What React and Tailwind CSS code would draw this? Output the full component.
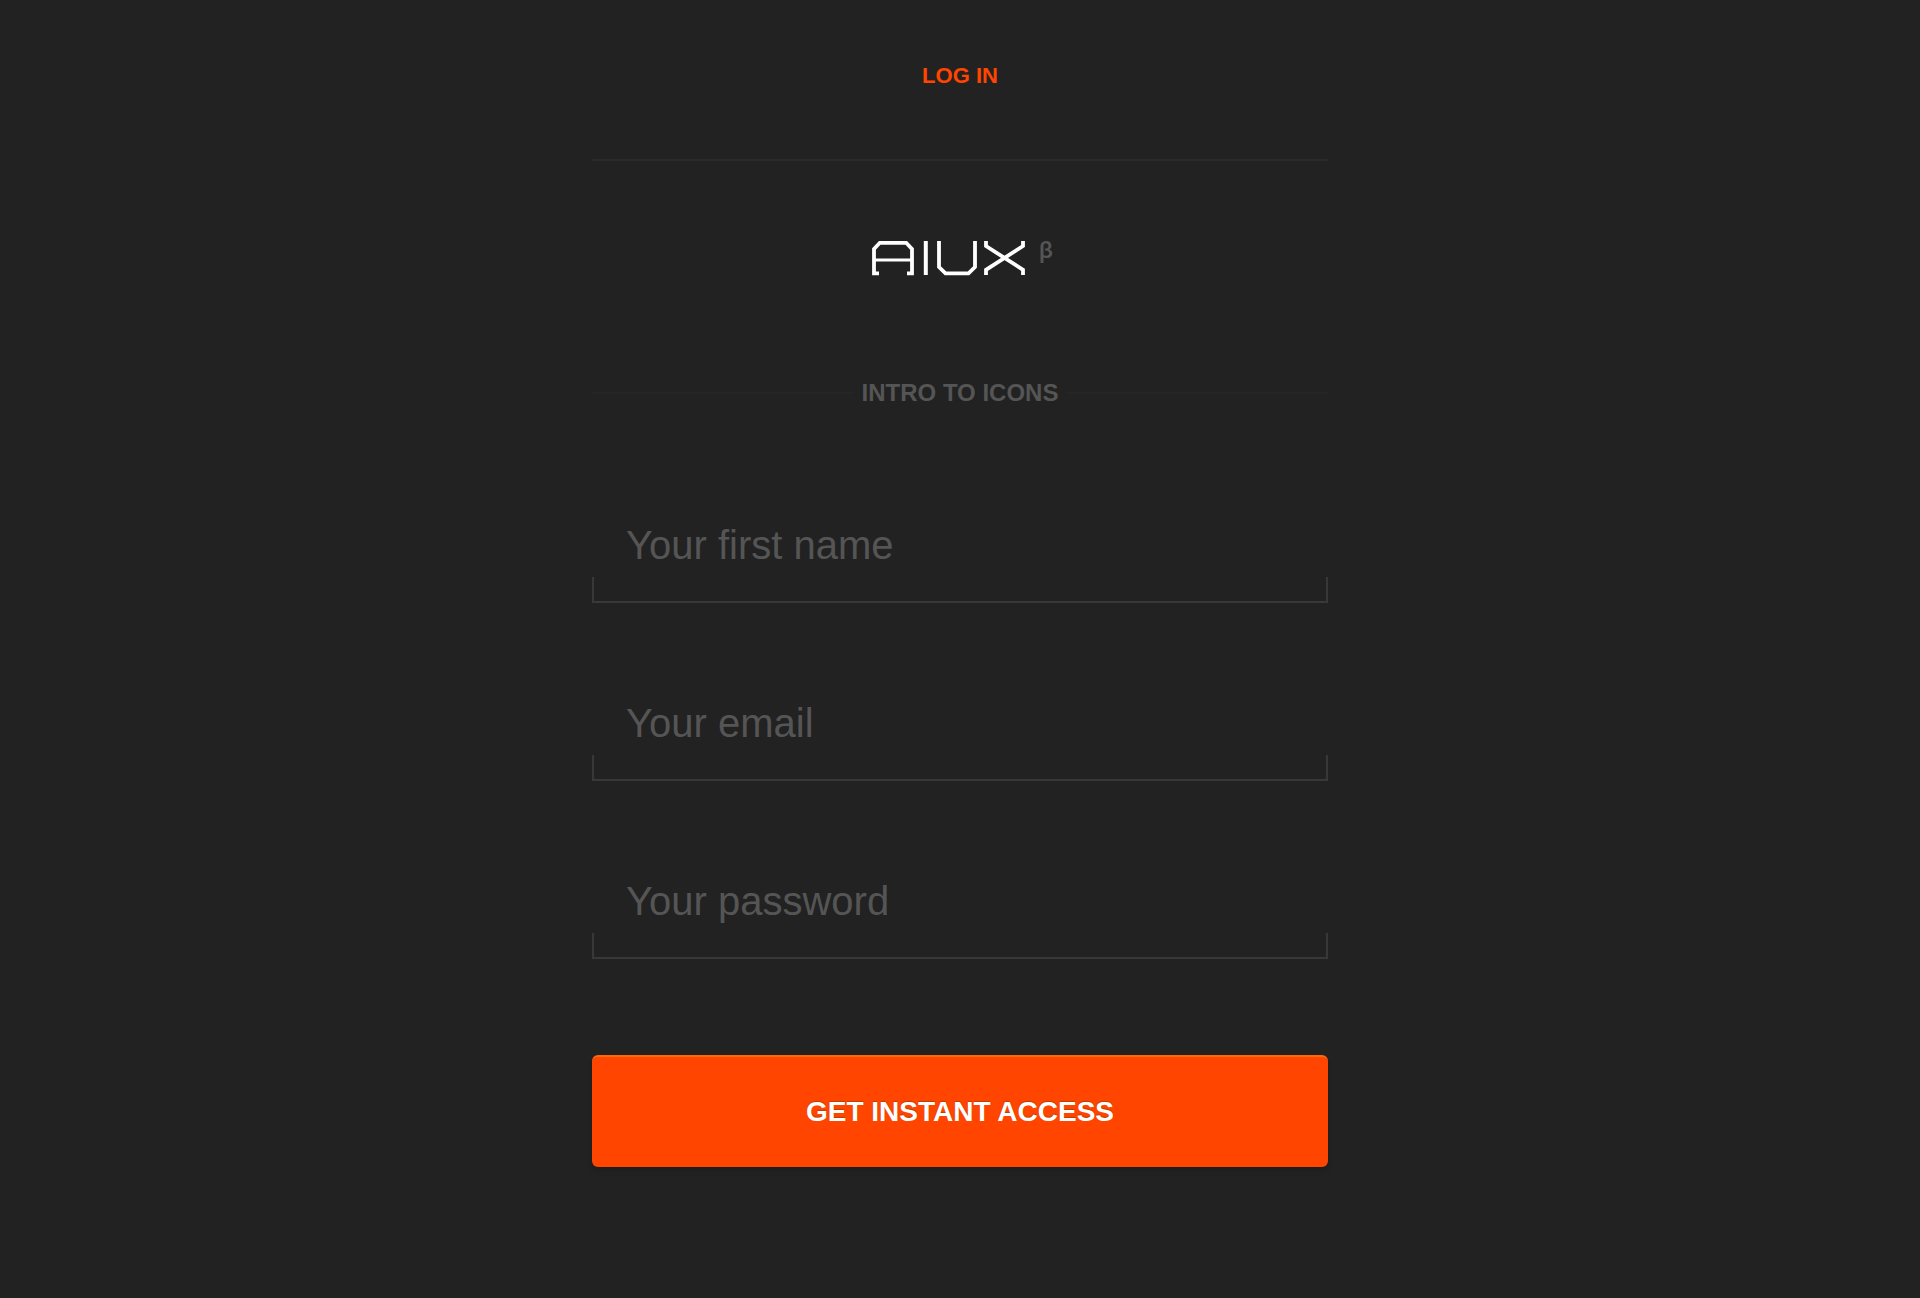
const fields = [
  { id: "first-name", label: "Your first name", type: "text" },
  { id: "email", label: "Your email", type: "email" },
  { id: "password", label: "Your password", type: "password" },
];

function Logo() {
  return (
    <div className="flex items-start gap-3.5 pl-1">
      <svg width="154" height="38" viewBox="0 0 154 38" fill="none" stroke="#ffffff" role="img" aria-label="AIUX">
        <path d="M8 33.300H3V9L8.800 2.800H35.200L41 9V33.300H36" strokeWidth="3.800" />
        <path d="M3 20H41" strokeWidth="3" />
        <path d="M54.800 1V35" strokeWidth="4" />
        <path d="M68 1V27L74.500 33.300H97.500L104 27V1" strokeWidth="3.800" />
        <path d="M115 1V6L152 29.800V35M152 1V6L115 29.800V35" strokeWidth="3.800" />
      </svg>
      <span className="font-[Roboto,sans-serif] text-2xl leading-5 font-medium text-[#555555]">β</span>
    </div>
  );
}

function Field({ id, label, type }) {
  return (
    <div>
      <input
        id={id}
        type={type}
        aria-label={label}
        placeholder={label}
        className="block h-16 w-full bg-transparent px-[34px] text-[40px] text-white outline-none placeholder:text-[#555555]"
      />
      <div className="h-[26px] border-2 border-t-0 border-[#383838]" />
    </div>
  );
}

export default function App() {
  return (
    <div className="min-h-screen bg-[#222222] px-6 font-['Liberation_Sans',Arial,sans-serif]">
      <main className="mx-auto max-w-[736px]">
        <nav className="flex justify-center border-b-2 border-[#2a2a2a] pt-[60px] pb-[67px]">
          <a href="#login" className="text-[22px] leading-8 font-bold text-[#ff4500]">LOG IN</a>
        </nav>

        <div className="flex justify-center pt-[79px]">
          <Logo />
        </div>

        <div className="mt-[99px] flex items-center gap-2">
          <span className="h-0.5 flex-1 bg-[#252525]" />
          <h1 className="text-2xl font-bold text-[#555555]">INTRO TO ICONS</h1>
          <span className="h-0.5 flex-1 bg-[#252525]" />
        </div>

        <form className="mt-[104px] pb-[131px]">
          <div className="flex flex-col gap-[88px]">
            {fields.map((field) => (
              <Field key={field.id} {...field} />
            ))}
          </div>
          <button
            type="button"
            className="mt-24 block h-28 w-full rounded-md border-t-2 border-[#ff6a00] bg-[#ff4500] text-[28px] font-bold text-white shadow-md [text-shadow:0_-1px_1px_#b84000]"
          >
            GET INSTANT ACCESS
          </button>
        </form>
      </main>
    </div>
  );
}
